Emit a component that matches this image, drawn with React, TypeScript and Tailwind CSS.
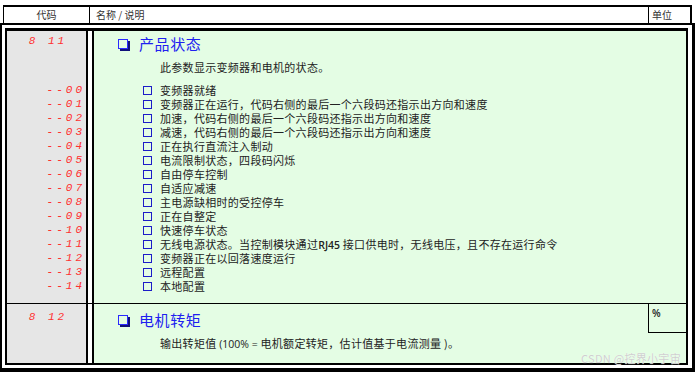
import React from "react";

const items: [string, React.ReactNode][] = [
  ["--00", "变频器就绪"],
  ["--01", "变频器正在运行，代码右侧的最后一个六段码还指示出方向和速度"],
  ["--02", "加速，代码右侧的最后一个六段码还指示出方向和速度"],
  ["--03", "减速，代码右侧的最后一个六段码还指示出方向和速度"],
  ["--04", "正在执行直流注入制动"],
  ["--05", "电流限制状态，四段码闪烁"],
  ["--06", "自由停车控制"],
  ["--07", "自适应减速"],
  ["--08", "主电源缺相时的受控停车"],
  ["--09", "正在自整定"],
  ["--10", "快速停车状态"],
  [
    "--11",
    <>
      无线电源状态。当控制模块通过
      <span className="font-['Open_Sans',sans-serif] font-semibold tracking-normal text-[10.5px]">RJ45 </span>
      接口供电时，无线电压，且不存在运行命令
    </>,
  ],
  ["--12", "变频器正在以回落速度运行"],
  ["--13", "远程配置"],
  ["--14", "本地配置"],
];

const codeCls =
  "font-['Liberation_Mono',monospace] italic text-[11px] text-[#ff3030] tracking-[3px] leading-[14px] whitespace-pre";
const cjk = "font-['Noto_Sans_CJK_SC','Noto_Sans',sans-serif]";

function TitleBox() {
  return (
    <span className="inline-block w-[10px] h-[10px] border-[1.5px] border-[#2a2aff] shadow-[2px_2px_0_#10107a]" />
  );
}

function SmallBox() {
  return <span className="inline-block w-[9px] h-[9px] border border-[#1c1cc8]" />;
}

export default function App() {
  return (
    <div className={`relative w-[697px] h-[374px] bg-white overflow-hidden ${cjk}`}>
      {/* header */}
      <div className="pt-[5px] pl-[3px]">
        <div className="w-[689px] h-[18px] border-t-2 border-l border-r-2 border-black flex text-[10px] text-[#333] leading-[16px]">
          <div className="w-[86px] border-r border-black text-center">代码</div>
          <div className="flex-1 border-r border-black pl-[6px]">名称 / 说明</div>
          <div className="w-[41px] pl-[3px]">单位</div>
        </div>
      </div>
      {/* body */}
      <div className="w-[695px] h-[349px] border-t-2 border-l-2 border-r-[3px] border-b-4 border-black pt-[3px] pl-[3px] pr-[4px] pb-[3px]">
        <div className="h-full border-t-[3px] border-l-2 border-r-2 border-b-2 border-black flex flex-col">
          {/* row 1 */}
          <div className="h-[273px] flex border-b border-black">
            <div className="w-[79px] bg-[#e6e6e6] flex flex-col">
              <div className={`${codeCls} text-center pl-[3px] mt-[3px]`}>8 11</div>
              <div className="mt-[35px] flex flex-col items-end pr-[1px]">
                {items.map(([c]) => (
                  <div key={c} className={codeCls}>
                    {c}
                  </div>
                ))}
              </div>
            </div>
            <div className="w-[8px] border-l-2 border-r-2 border-black bg-white" />
            <div className="flex-1 bg-[#e4fde4] pl-[24px] pt-[4px]">
              <div className="flex items-center h-[18px]">
                <TitleBox />
                <span className="ml-[11px] text-[15px] tracking-[0.6px] text-[#2020f0] leading-[18px]">产品状态</span>
              </div>
              <div className="mt-[7px] pl-[42px] text-[11px] leading-[14px] tracking-[0.3px] text-[#222]">
                此参数显示变频器和电机的状态。
              </div>
              <div className="mt-[9px] pl-[25px] flex flex-col">
                {items.map(([c, t]) => (
                  <div key={c} className="flex items-center h-[14px]">
                    <SmallBox />
                    <span className="ml-[8px] text-[11px] leading-[14px] tracking-[0.3px] text-[#222] whitespace-nowrap">
                      {t}
                    </span>
                  </div>
                ))}
              </div>
            </div>
          </div>
          {/* row 2 */}
          <div className="flex-1 flex">
            <div className="w-[79px] bg-[#e6e6e6]">
              <div className={`${codeCls} text-center pl-[3px] mt-[6px]`}>8 12</div>
            </div>
            <div className="w-[8px] border-l-2 border-r-2 border-black bg-white" />
            <div className="flex-1 bg-[#e4fde4] flex">
              <div className="flex-1 pl-[24px] pt-[7px]">
                <div className="flex items-center h-[18px]">
                  <TitleBox />
                  <span className="ml-[11px] text-[15px] tracking-[0.6px] text-[#2020f0] leading-[18px]">电机转矩</span>
                </div>
                <div className="mt-[7px] pl-[42px] text-[11px] leading-[14px] tracking-[0.3px] text-[#222] whitespace-nowrap">
                  输出转矩值
                  <span className="font-['Open_Sans',sans-serif] tracking-normal text-[10.5px]"> (100% = </span>
                  电机额定转矩，估计值基于电流测量 )。
                </div>
              </div>
              <div className="w-[38px] h-[29px] border-l border-b border-black pl-[3px] pt-[2px] text-[10px] font-['Open_Sans',sans-serif] font-semibold text-[#222] leading-[14px]">
                %
              </div>
            </div>
          </div>
        </div>
      </div>
      <div className="absolute left-[581px] top-[352px] text-[11px] text-[#cfcfcf] leading-[12px] tracking-[0.3px] [text-shadow:0_0_1px_#fff]">
        CSDN @控界小宇宙
      </div>
    </div>
  );
}
